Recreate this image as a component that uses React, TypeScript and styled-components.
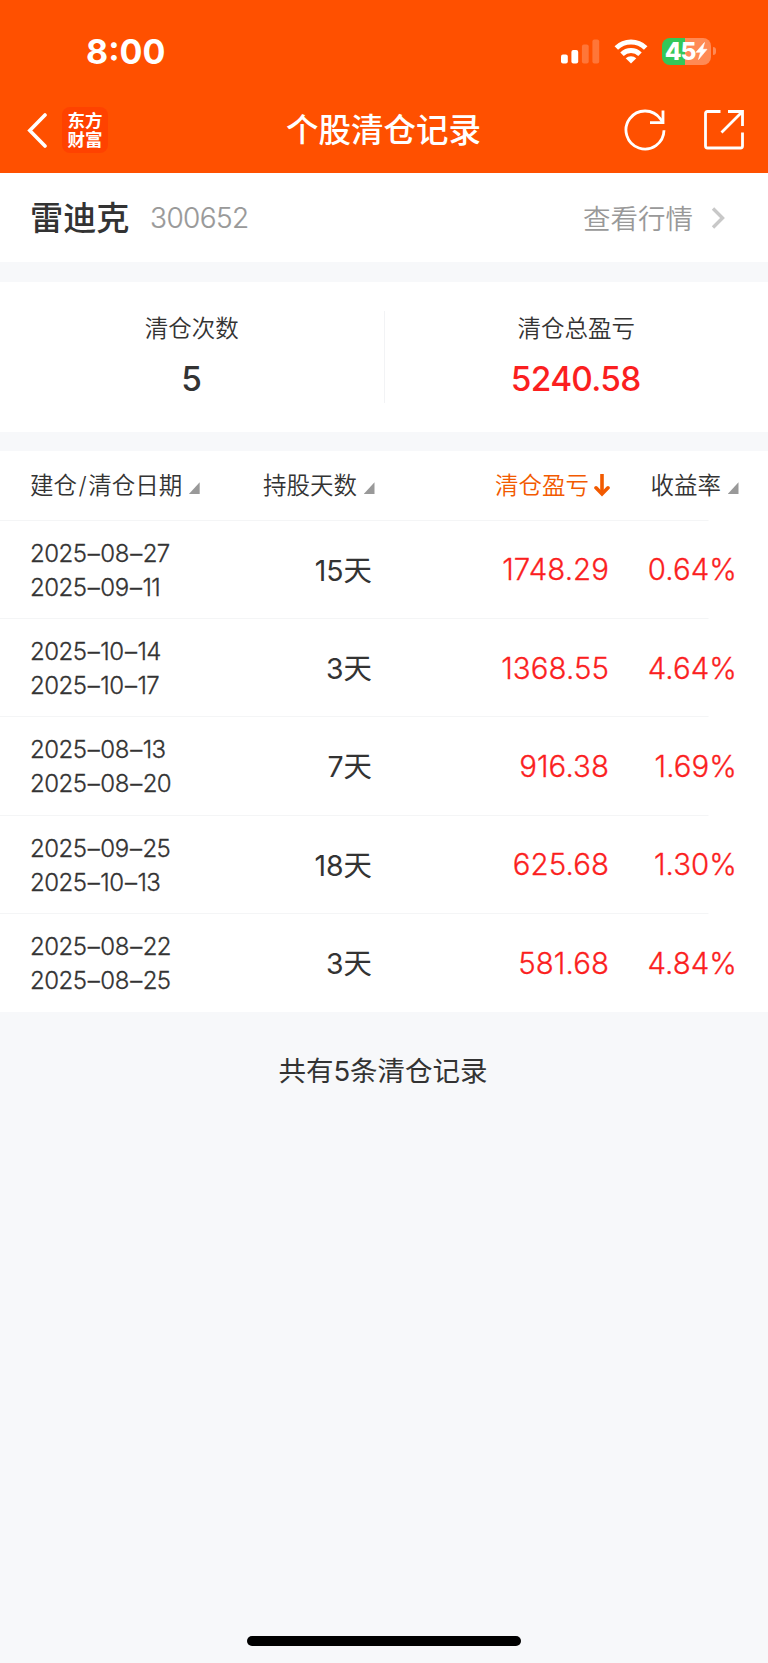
import React from 'react';
import styled, { createGlobalStyle } from 'styled-components';

const GlobalStyle = createGlobalStyle`
  * { box-sizing: border-box; }
  body {
    margin: 0;
    background: #f7f8fa;
    color: #333;
    font-family: Inter, "Noto Sans CJK SC", sans-serif;
    font-weight: 400;
  }
`;

const Screen = styled.div`
  display: flex;
  flex-direction: column;
  width: 768px;
  min-height: 1663px;
`;

const Header = styled.header`
  height: 173.4px;
  background: #ff5000;
  color: #fff;
`;

const StatusBar = styled.div`
  display: flex;
  align-items: center;
  justify-content: space-between;
  height: 102px;
  padding: 0 52px 0 86px;
`;

const Clock = styled.div`
  padding-top: 2px;
  font-size: 34px;
  font-weight: 750;
  line-height: 40px;
`;

const StatusIcons = styled.div`
  display: flex;
  align-items: center;
  gap: 14px;
`;

const Battery = styled.div`
  display: flex;
  align-items: center;
  gap: 2px;
`;

const BatteryBody = styled.div`
  display: flex;
  align-items: center;
  justify-content: center;
  width: 49px;
  height: 27px;
  border-radius: 8px;
  background: linear-gradient(90deg, #34c759 0 46%, #ff8a55 46%);
`;

const BatteryLevel = styled.span`
  font-size: 24.5px;
  font-weight: 850;
  line-height: 27px;
  letter-spacing: -1.2px;
`;

const BatteryTip = styled.span`
  width: 3px;
  height: 8px;
  border-radius: 0 4px 4px 0;
  background: #ff8a55;
`;

const NavBar = styled.nav`
  display: grid;
  grid-template-columns: 1fr auto 1fr;
  align-items: center;
  height: 56px;
  padding: 0 23px 0 26px;
`;

const NavGroup = styled.div<{ $end?: boolean }>`
  display: flex;
  align-items: center;
  justify-content: ${(p) => (p.$end ? 'flex-end' : 'flex-start')};
  gap: ${(p) => (p.$end ? 38 : 14)}px;
`;

const AppLogo = styled.div`
  display: flex;
  flex-direction: column;
  align-items: center;
  justify-content: center;
  width: 46px;
  height: 46px;
  border-radius: 8px;
  background: #ff4200;
  font-size: 17.5px;
  font-weight: 700;
  line-height: 19.5px;
`;

const Title = styled.h1`
  margin: 0 4px 0 0;
  padding-top: 2px;
  font-size: 32.5px;
  font-weight: 500;
  line-height: 48px;
`;

const StockRow = styled.section`
  display: flex;
  align-items: center;
  height: 88.6px;
  padding: 0 42px 0 30px;
  background: #fff;
`;

const StockName = styled.span`
  padding-bottom: 4px;
  font-size: 33.2px;
  font-weight: 500;
`;

const StockCode = styled.span`
  margin-left: 20.5px;
  color: #999;
  font-size: 28px;
  font-weight: 300;
  letter-spacing: -0.6px;
  -webkit-text-stroke: 0.2px;
`;

const QuoteLink = styled.a`
  display: flex;
  align-items: center;
  gap: 18px;
  margin-left: auto;
  color: #999;
  font-size: 27.5px;
  font-weight: 350;
`;

const QuoteText = styled.span`
  padding-bottom: 2px;
`;

const Summary = styled.section`
  display: flex;
  align-items: center;
  height: 150px;
  margin: 20px 0 19px;
  background: #fff;
`;

const Metric = styled.div`
  flex: 1;
  height: 92px;
  text-align: center;
  & + & { border-left: 1px solid #f2f3f5; }
`;

const MetricLabel = styled.div`
  font-size: 23.5px;
  font-weight: 350;
  line-height: 36px;
`;

const MetricValue = styled.div<{ $gain?: boolean }>`
  margin-top: 12px;
  padding-right: 1px;
  color: ${(p) => (p.$gain ? '#fb1f1f' : '#333')};
  font-size: 33.4px;
  font-weight: 550;
  line-height: 40px;
  letter-spacing: -0.7px;
`;

const Table = styled.section`
  background: #fff;
`;

const Row = styled.div<{ $head?: boolean; $last?: boolean }>`
  display: grid;
  grid-template-columns: 342px 237px 127px;
  align-items: center;
  height: ${(p) => (p.$head ? 69.6 : 98.35)}px;
  padding-left: 30px;
  background: ${(p) =>
    p.$last ? 'none' : 'linear-gradient(#f4f5f6, #f4f5f6) left bottom / 708.5px 1px no-repeat'};
`;

const DateDaysCell = styled.div`
  display: flex;
  align-items: center;
  justify-content: space-between;
`;

const Cell = styled.div`
  display: flex;
  justify-content: flex-end;
`;

const HeadLabel = styled.span<{ $active?: boolean }>`
  display: flex;
  align-items: center;
  gap: ${(p) => (p.$active ? 5 : 6.5)}px;
  margin-right: ${(p) => (p.$active ? -1 : -2.5)}px;
  color: ${(p) => (p.$active ? '#f25a00' : '#333')};
  font-size: 23.5px;
  font-weight: 350;
  line-height: 36px;
`;

const Slash = styled.span`
  margin: 0 1.5px;
`;

const SortMark = styled.i`
  width: 11px;
  height: 12px;
  margin-top: 5px;
  background: #999;
  clip-path: polygon(100% 0, 100% 100%, 0 100%);
`;

const Dates = styled.div`
  padding-top: 2px;
  font-size: 24px;
  font-weight: 300;
  line-height: 34.2px;
  letter-spacing: -0.5px;
  font-feature-settings: "calt" 0;
  -webkit-text-stroke: 0.3px;
`;

const Dash = styled.span`
  margin: 0 1px 0 1.3px;
`;

const Days = styled.div`
  padding-bottom: 3px;
  font-size: 28.4px;
  font-weight: 370;
`;

const Amount = styled.div`
  color: #fb1f1f;
  font-size: 29.4px;
  font-weight: 300;
  letter-spacing: 0.1px;
  -webkit-text-stroke: 0.3px;
`;

const Rate = styled(Amount)`
  margin-right: -1px;
`;

const Total = styled.p`
  margin: 38px 2px 0 0;
  font-size: 27.5px;
  font-weight: 370;
  line-height: 42px;
  text-align: center;
`;

const HomeIndicator = styled.div`
  width: 274px;
  height: 10px;
  margin: auto auto 17px;
  border-radius: 5px;
  background: #000;
`;

const records = [
  { open: '2025–08–27', close: '2025–09–11', days: 15, profit: '1748.29', rate: '0.64%' },
  { open: '2025–10–14', close: '2025–10–17', days: 3, profit: '1368.55', rate: '4.64%' },
  { open: '2025–08–13', close: '2025–08–20', days: 7, profit: '916.38', rate: '1.69%' },
  { open: '2025–09–25', close: '2025–10–13', days: 18, profit: '625.68', rate: '1.30%' },
  { open: '2025–08–22', close: '2025–08–25', days: 3, profit: '581.68', rate: '4.84%' },
];

const DateText = ({ value }: { value: string }) => {
  const [year, month, day] = value.split('–');
  return (
    <div>
      {year}<Dash>–</Dash>{month}<Dash>–</Dash>{day}
    </div>
  );
};

const SignalIcon = () => (
  <svg width="39" height="25" viewBox="0 0 39 25" fill="#fff">
    <rect x="0" y="15.5" width="6.8" height="9" rx="2" />
    <rect x="10.4" y="11" width="6.8" height="13.5" rx="2" />
    <rect x="20.9" y="5.5" width="6.8" height="19" rx="2" opacity=".22" />
    <rect x="31.4" y="0.5" width="6.8" height="24" rx="2" opacity=".22" />
  </svg>
);

const WifiIcon = () => (
  <svg width="34" height="25" viewBox="0 0 34 25" fill="none" stroke="#fff" strokeWidth="5">
    <path d="M2.3 9 A21 21 0 0 1 31.7 9" />
    <path d="M8 15.2 A13 13 0 0 1 26 15.2" />
    <path d="M11.7 19.3 A7.8 7.8 0 0 1 22.3 19.3 L17 24.5 Z" fill="#fff" stroke="none" />
  </svg>
);

const BoltIcon = () => (
  <svg width="13" height="18" viewBox="0 0 12 18" fill="#fff" stroke="#fff" strokeWidth="0.6" strokeLinejoin="round">
    <path d="M9 0.5 L0.5 10.3 H5 L3 17.5 L11.5 7.3 H7.2 Z" />
  </svg>
);

const BackIcon = () => (
  <svg width="22" height="36" viewBox="0 0 22 36" fill="none" stroke="#fff" strokeWidth="3.6" strokeLinecap="round">
    <path d="M19 3 L3.8 18.5 L19 34" />
  </svg>
);

const RefreshIcon = () => (
  <svg width="42" height="42" viewBox="0 0 42 42" fill="none" stroke="#fff" strokeWidth="2.8">
    <path d="M40 21.3 A19 19 0 1 1 36.5 10 L38.8 13.5" />
    <path d="M39 1.5 V13.7 H26" />
  </svg>
);

const ShareIcon = () => (
  <svg width="41" height="42" viewBox="0 0 41 42" fill="none" stroke="#fff" strokeWidth="2.8">
    <path d="M16.5 2.5 H3.5 Q1.5 2.5 1.5 4.5 V37 Q1.5 39 3.5 39 H36.5 Q38.5 39 38.5 37 V23.5" />
    <path d="M24 2.5 H38.5 V17 M38.5 2.5 L17.5 23.5" />
  </svg>
);

const ChevronIcon = () => (
  <svg width="15" height="22" viewBox="0 0 15 22" fill="none" stroke="#c8c8c8" strokeWidth="3.4">
    <path d="M2 1.5 L11.5 11 L2 20.5" />
  </svg>
);

const DownArrowIcon = () => (
  <svg width="16" height="23" viewBox="0 0 16 23" fill="none" stroke="#f25a00" strokeWidth="3.6">
    <path d="M8 0 V20" />
    <path d="M2 13.8 L8 20 L14 13.8" strokeLinecap="round" />
  </svg>
);

export default function App() {
  return (
    <Screen>
      <GlobalStyle />
      <Header>
        <StatusBar>
          <Clock>8:00</Clock>
          <StatusIcons>
            <SignalIcon />
            <WifiIcon />
            <Battery>
              <BatteryBody>
                <BatteryLevel>45</BatteryLevel>
                <BoltIcon />
              </BatteryBody>
              <BatteryTip />
            </Battery>
          </StatusIcons>
        </StatusBar>
        <NavBar>
          <NavGroup>
            <BackIcon />
            <AppLogo>
              <span>东方</span>
              <span>财富</span>
            </AppLogo>
          </NavGroup>
          <Title>个股清仓记录</Title>
          <NavGroup $end>
            <RefreshIcon />
            <ShareIcon />
          </NavGroup>
        </NavBar>
      </Header>

      <StockRow>
        <StockName>雷迪克</StockName>
        <StockCode>300652</StockCode>
        <QuoteLink>
          <QuoteText>查看行情</QuoteText>
          <ChevronIcon />
        </QuoteLink>
      </StockRow>

      <Summary>
        <Metric>
          <MetricLabel>清仓次数</MetricLabel>
          <MetricValue>5</MetricValue>
        </Metric>
        <Metric>
          <MetricLabel>清仓总盈亏</MetricLabel>
          <MetricValue $gain>5240.58</MetricValue>
        </Metric>
      </Summary>

      <Table>
        <Row $head>
          <DateDaysCell>
            <HeadLabel>
              <span>建仓<Slash>/</Slash>清仓日期</span>
              <SortMark />
            </HeadLabel>
            <HeadLabel>持股天数<SortMark /></HeadLabel>
          </DateDaysCell>
          <Cell>
            <HeadLabel $active>清仓盈亏<DownArrowIcon /></HeadLabel>
          </Cell>
          <Cell>
            <HeadLabel>收益率<SortMark /></HeadLabel>
          </Cell>
        </Row>
        {records.map((r, i) => (
          <Row key={r.open} $last={i === records.length - 1}>
            <DateDaysCell>
              <Dates>
                <DateText value={r.open} />
                <DateText value={r.close} />
              </Dates>
              <Days>{r.days}天</Days>
            </DateDaysCell>
            <Cell><Amount>{r.profit}</Amount></Cell>
            <Cell><Rate>{r.rate}</Rate></Cell>
          </Row>
        ))}
      </Table>

      <Total>共有5条清仓记录</Total>
      <HomeIndicator />
    </Screen>
  );
}
